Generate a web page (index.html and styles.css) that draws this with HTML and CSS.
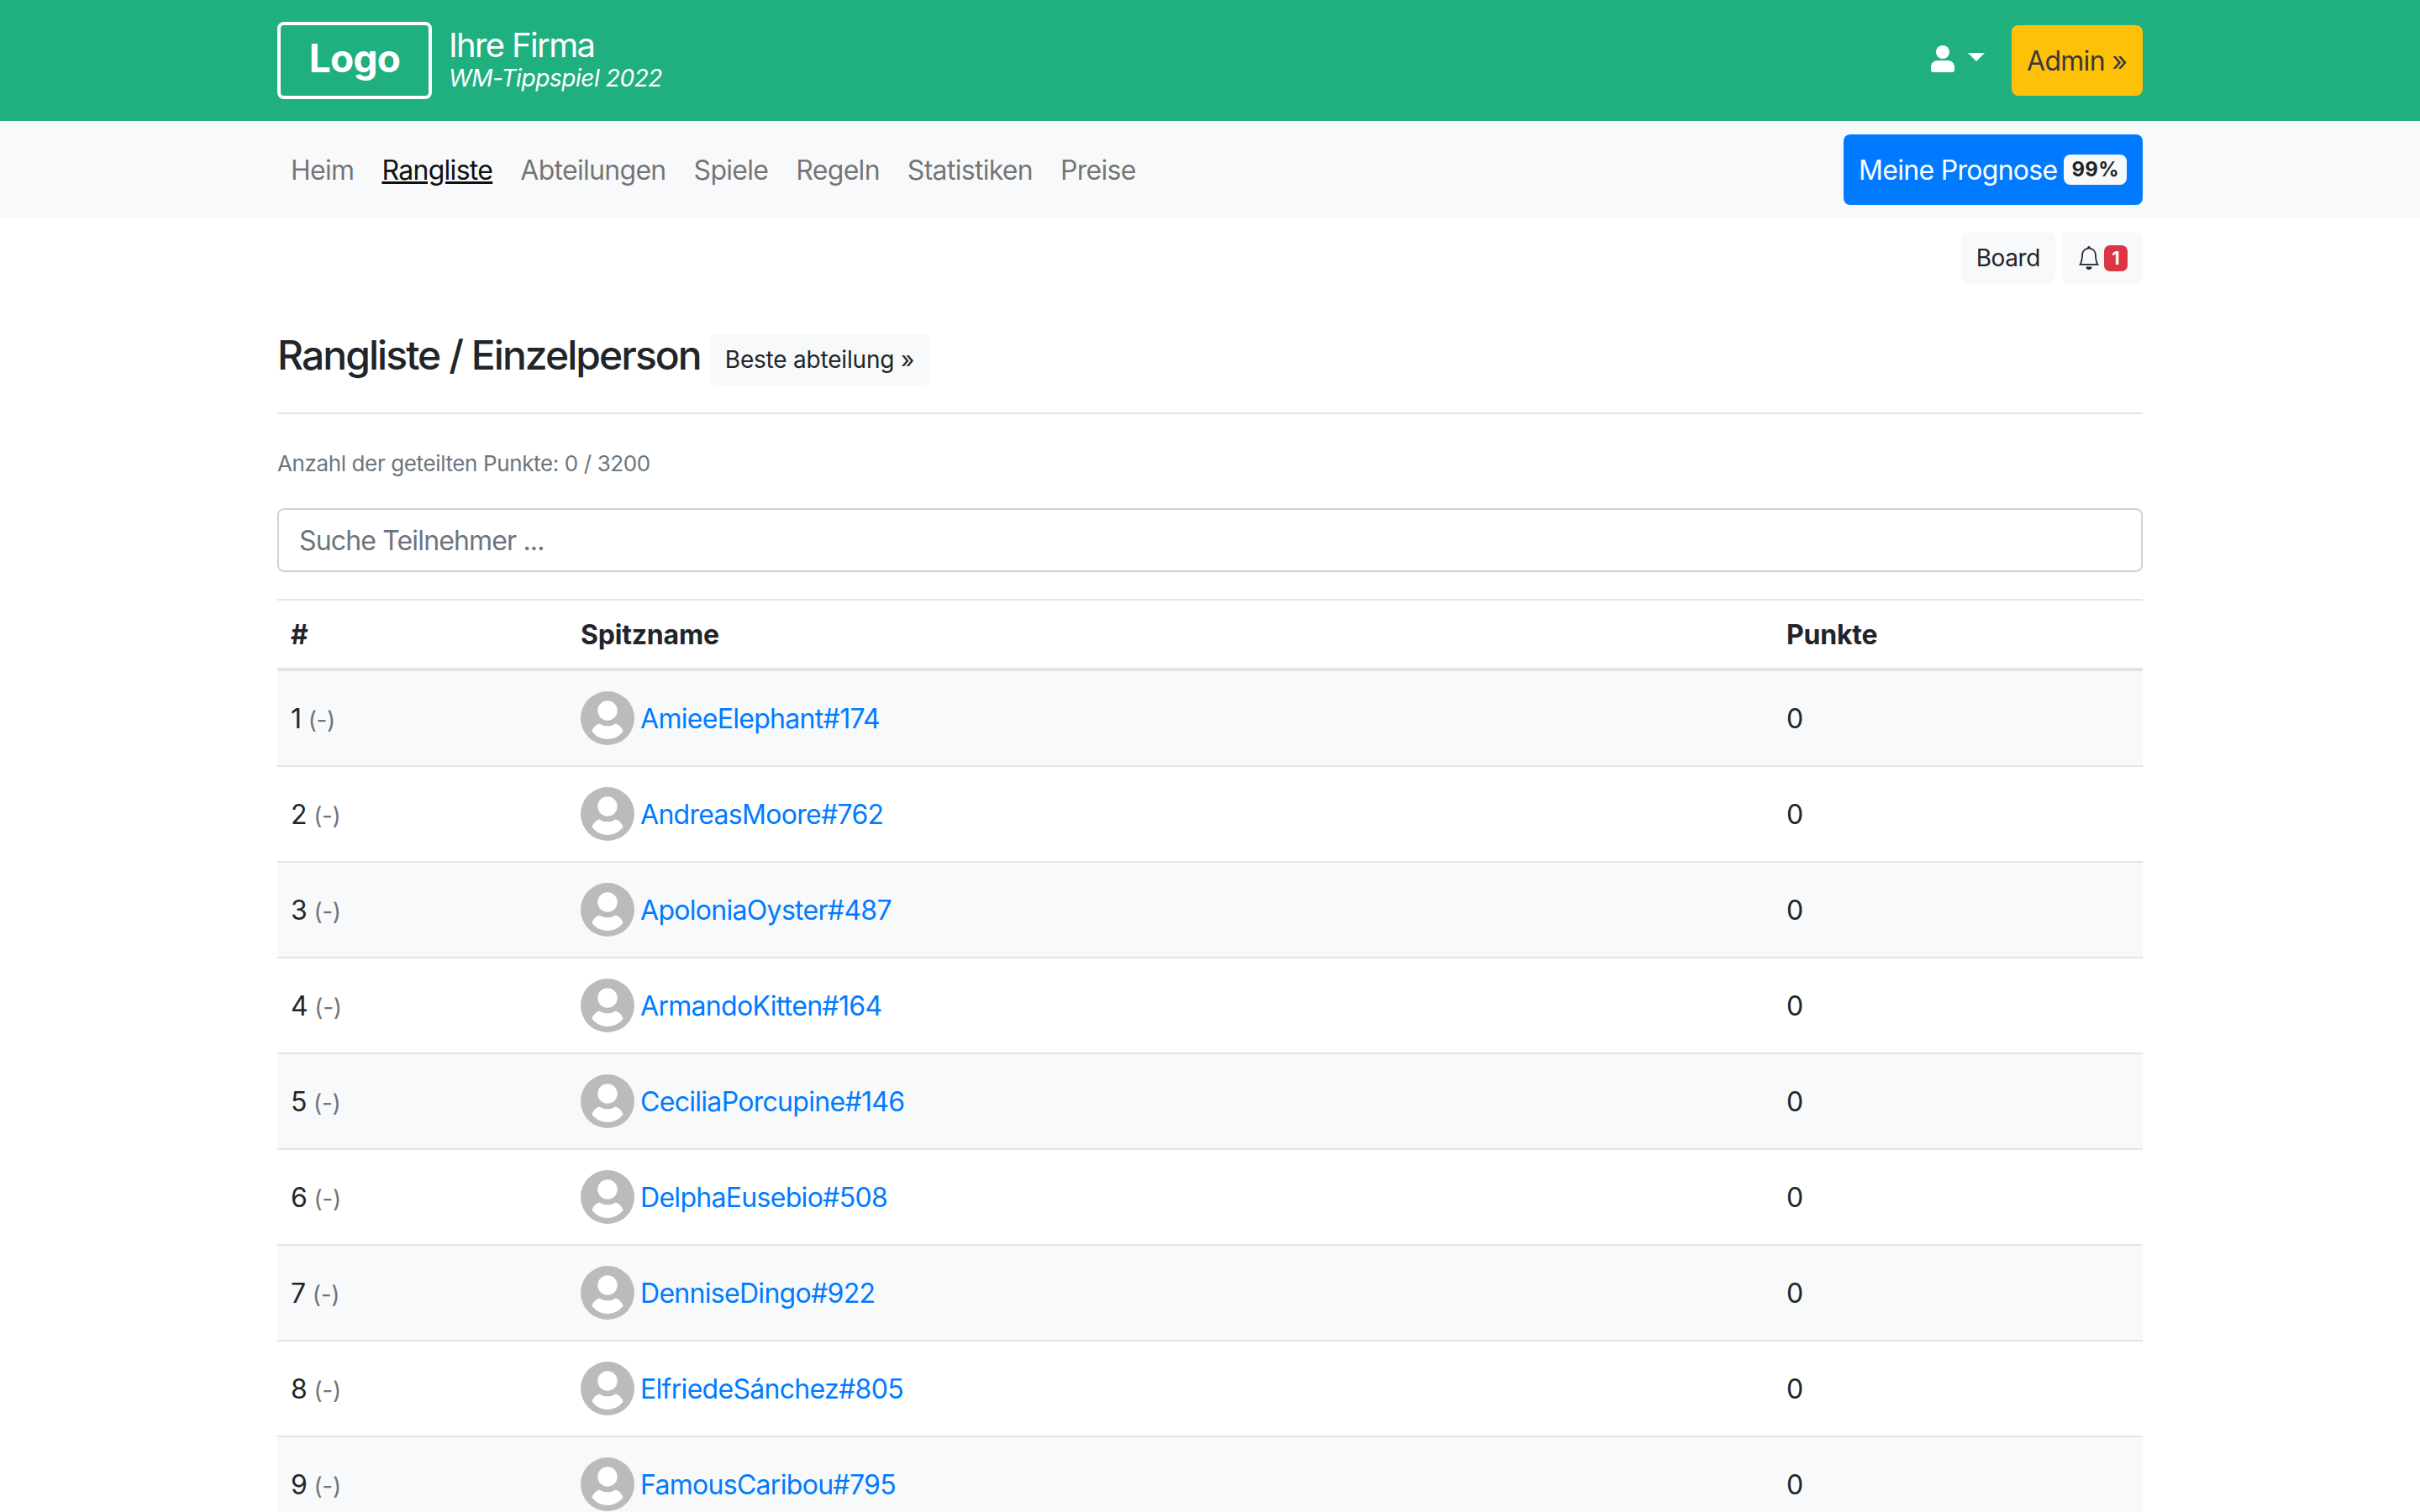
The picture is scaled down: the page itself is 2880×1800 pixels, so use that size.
FILE: index.html
```html
<!DOCTYPE html>
<html lang="de">
<head>
<meta charset="utf-8">
<title>Rangliste</title>
<link rel="stylesheet" href="styles.css">
</head>
<body>
<svg class="defs" width="0" height="0" aria-hidden="true">
  <symbol id="avatar" viewBox="0 0 64 64">
    <circle cx="32" cy="32" r="32" fill="#bbb"/>
    <circle cx="32" cy="23" r="11.7" fill="#fff"/>
    <path d="M13.5 47.5C15 43 18.500 39.500 22.500 38.500C25.500 40.500 28.500 41.300 32 41.300C35.500 41.300 38.500 40.500 41.500 38.500C45.500 39.500 49 43 50.500 47.500C46 53.500 39.500 57 32 57C24.500 57 18 53.500 13.500 47.500Z" fill="#fff"/>
  </symbol>
</svg>
<header class="topbar">
  <div class="container topbar-inner">
    <a class="logo">Logo</a>
    <div class="brand">
      <div class="brand-name">Ihre Firma</div>
      <div class="brand-sub">WM-Tippspiel 2022</div>
    </div>
    <div class="topbar-right">
      <a class="user-menu">
        <svg class="user-icon" viewBox="0 0 28 32"><circle cx="14" cy="8" r="8" fill="#fff"/><path d="M0 26C0 21 3.500 18 8 18H20C24.500 18 28 21 28 26V29C28 31 27 32 25 32H3C1 32 0 31 0 29Z" fill="#fff"/></svg>
        <span class="caret"></span>
      </a>
      <a class="btn btn-admin"><span class="btn-label">Admin »</span></a>
    </div>
  </div>
</header>
<nav class="mainnav">
  <div class="container mainnav-inner">
    <ul class="navlinks">
      <li><a>Heim</a></li>
      <li><a class="active">Rangliste</a></li>
      <li><a>Abteilungen</a></li>
      <li><a>Spiele</a></li>
      <li><a>Regeln</a></li>
      <li><a>Statistiken</a></li>
      <li><a>Preise</a></li>
    </ul>
    <a class="btn btn-forecast"><span class="btn-label">Meine Prognose</span> <span class="pill">99%</span></a>
  </div>
</nav>
<main class="container">
  <div class="tools">
    <a class="btn-light btn-board">Board</a>
    <a class="btn-light bell-btn">
      <svg class="bell" viewBox="0 0 16 16" fill="#212529"><path d="M8 16a2 2 0 0 0 2-2H6a2 2 0 0 0 2 2zM8 1.918l-.797.161A4.002 4.002 0 0 0 4 6c0 .628-.134 2.197-.459 3.742-.16.767-.376 1.566-.663 2.258h10.244c-.287-.692-.502-1.49-.663-2.258C12.134 8.197 12 6.628 12 6a4.002 4.002 0 0 0-3.203-3.92L8 1.917zM14.22 12c.223.447.481.801.78 1H1c.299-.199.557-.553.78-1C2.68 10.2 3 6.88 3 6c0-2.42 1.72-4.44 4.005-4.901a1 1 0 1 1 1.99 0A5.002 5.002 0 0 1 13 6c0 .88.32 4.2 1.22 6z"/></svg>
      <span class="count">1</span>
    </a>
  </div>
  <div class="title-row">
    <h1>Rangliste / Einzelperson</h1>
    <a class="btn-light">Beste abteilung »</a>
  </div>
  <p class="shared">Anzahl der geteilten Punkte: 0 / 3200</p>
  <input class="search" type="text" placeholder="Suche Teilnehmer ...">
  <table class="ranking">
    <colgroup><col class="c-rank"><col class="c-name"><col class="c-points"></colgroup>
    <thead><tr><th>#</th><th>Spitzname</th><th>Punkte</th></tr></thead>
    <tbody>
      <tr><td>1 <small>(-)</small></td><td><div class="person"><svg class="avatar"><use href="#avatar"/></svg><a>AmieeElephant#174</a></div></td><td>0</td></tr>
      <tr><td>2 <small>(-)</small></td><td><div class="person"><svg class="avatar"><use href="#avatar"/></svg><a>AndreasMoore#762</a></div></td><td>0</td></tr>
      <tr><td>3 <small>(-)</small></td><td><div class="person"><svg class="avatar"><use href="#avatar"/></svg><a>ApoloniaOyster#487</a></div></td><td>0</td></tr>
      <tr><td>4 <small>(-)</small></td><td><div class="person"><svg class="avatar"><use href="#avatar"/></svg><a>ArmandoKitten#164</a></div></td><td>0</td></tr>
      <tr><td>5 <small>(-)</small></td><td><div class="person"><svg class="avatar"><use href="#avatar"/></svg><a>CeciliaPorcupine#146</a></div></td><td>0</td></tr>
      <tr><td>6 <small>(-)</small></td><td><div class="person"><svg class="avatar"><use href="#avatar"/></svg><a>DelphaEusebio#508</a></div></td><td>0</td></tr>
      <tr><td>7 <small>(-)</small></td><td><div class="person"><svg class="avatar"><use href="#avatar"/></svg><a>DenniseDingo#922</a></div></td><td>0</td></tr>
      <tr><td>8 <small>(-)</small></td><td><div class="person"><svg class="avatar"><use href="#avatar"/></svg><a>ElfriedeSánchez#805</a></div></td><td>0</td></tr>
      <tr><td>9 <small>(-)</small></td><td><div class="person"><svg class="avatar"><use href="#avatar"/></svg><a>FamousCaribou#795</a></div></td><td>0</td></tr>
    </tbody>
  </table>
</main>
</body>
</html>
```
FILE: styles.css
```css
* { box-sizing: border-box; }
html, body { height: 100%; overflow: hidden; }
body { margin: 0; background: #fff; color: #212529; font-family: Inter, "Liberation Sans", sans-serif; font-size: 32px; line-height: 48px; letter-spacing: -0.7px; }
.defs { position: absolute; }
.container { width: 2220px; margin: 0 auto; }

.topbar { background: #20b080; height: 144px; }
.topbar-inner { display: flex; align-items: center; height: 100%; }
.logo { width: 184px; height: 92px; border: 4px solid #fff; border-radius: 8px; color: #fff; font-size: 46px; font-weight: 700; letter-spacing: -0.8px; padding-bottom: 6px; display: flex; align-items: center; justify-content: center; }
.brand { margin-left: 20px; color: #fff; }
.brand-name { font-size: 40px; line-height: 44px; margin-top: -2px; letter-spacing: -1.65px; }
.brand-sub { font-size: 28px; line-height: 34px; font-style: italic; letter-spacing: -0.43px; }
.topbar-right { margin-left: auto; display: flex; align-items: center; }
.user-menu { display: flex; align-items: center; gap: 16px; margin-right: 32px; margin-bottom: 4px; }
.user-icon { width: 28px; height: 32px; display: block; }
.caret { width: 0; height: 0; border-left: 10px solid transparent; border-right: 10px solid transparent; border-top: 10px solid #fff; margin-top: -4px; }
.btn { display: flex; align-items: center; height: 84px; padding: 0 18px; border-radius: 8px; }
.btn-label { padding-top: 2px; }
.btn-admin { background: #ffc107; color: #343a40; width: 156px; white-space: nowrap; }

.mainnav { background: #f8f9fa; height: 116px; }
.mainnav-inner { display: flex; align-items: center; justify-content: space-between; height: 100%; }
.navlinks { display: flex; list-style: none; margin: 0; padding: 2px 0 0 16px; gap: 33px; }
.navlinks a { color: rgba(0, 0, 0, .55); }
.navlinks a.active { color: #111; text-decoration: underline; }
.btn-forecast { background: #007bff; color: #fff; gap: 8px; width: 356px; white-space: nowrap; }
.pill { background: #f8f9fa; color: #212529; font-size: 24px; line-height: 36px; font-weight: 700; letter-spacing: 0.3px; padding: 0 9px; border-radius: 8px; }

.tools { display: flex; justify-content: flex-end; gap: 8px; margin-top: 16px; }
.btn-light { display: flex; align-items: center; height: 62px; padding: 0 18px; background: #f8f9fa; border-radius: 8px; font-size: 28px; letter-spacing: -0.2px; color: #212529; }
.btn-board { letter-spacing: -0.4px; }
.bell-btn { gap: 4px; }
.bell { width: 28px; height: 28px; display: block; }
.count { background: #dc3545; color: #fff; width: 28px; height: 31px; border-radius: 7px; font-size: 22px; font-weight: 700; line-height: 31px; text-align: center; letter-spacing: 0; }

.title-row { display: flex; align-items: center; gap: 11px; margin-top: 59px; padding-bottom: 32px; border-bottom: 2px solid #e2e4e8; }
h1 { margin: 0 0 10px; font-size: 48px; line-height: 52px; font-weight: 500; letter-spacing: -1.95px; }
.shared { margin: 42px 0 0; font-size: 26px; line-height: 34px; letter-spacing: -0.38px; color: #6c757d; }
.search { display: block; width: 100%; height: 76px; margin-top: 36px; padding: 0 24px; border: 2px solid #ced4da; border-radius: 8px; background: #fff; font: inherit; letter-spacing: -0.85px; color: #212529; }
.search::placeholder { color: #6c757d; opacity: 1; }

.ranking { width: 100%; margin-top: 32px; border-collapse: separate; border-spacing: 0; table-layout: fixed; border-top: 2px solid #e2e4e8; }
.c-rank { width: 345px; }
.c-points { width: 440px; }
.ranking th { height: 84px; padding: 2px 16px 0; text-align: left; font-weight: 700; letter-spacing: -0.2px; border-bottom: 4px solid #e2e4e8; }
.ranking td { height: 114px; padding: 2px 16px 0; border-bottom: 2px solid #e2e4e8; }
.ranking tbody tr:nth-child(odd) td { background: #f8f9fa; }
.ranking small { font-size: 28px; letter-spacing: -0.3px; color: #6c757d; }
.person { display: flex; align-items: center; gap: 7px; margin-top: -2px; }
.person a { padding-top: 2px; color: #007bff; }
.avatar { width: 64px; height: 64px; display: block; flex: none; }
```
